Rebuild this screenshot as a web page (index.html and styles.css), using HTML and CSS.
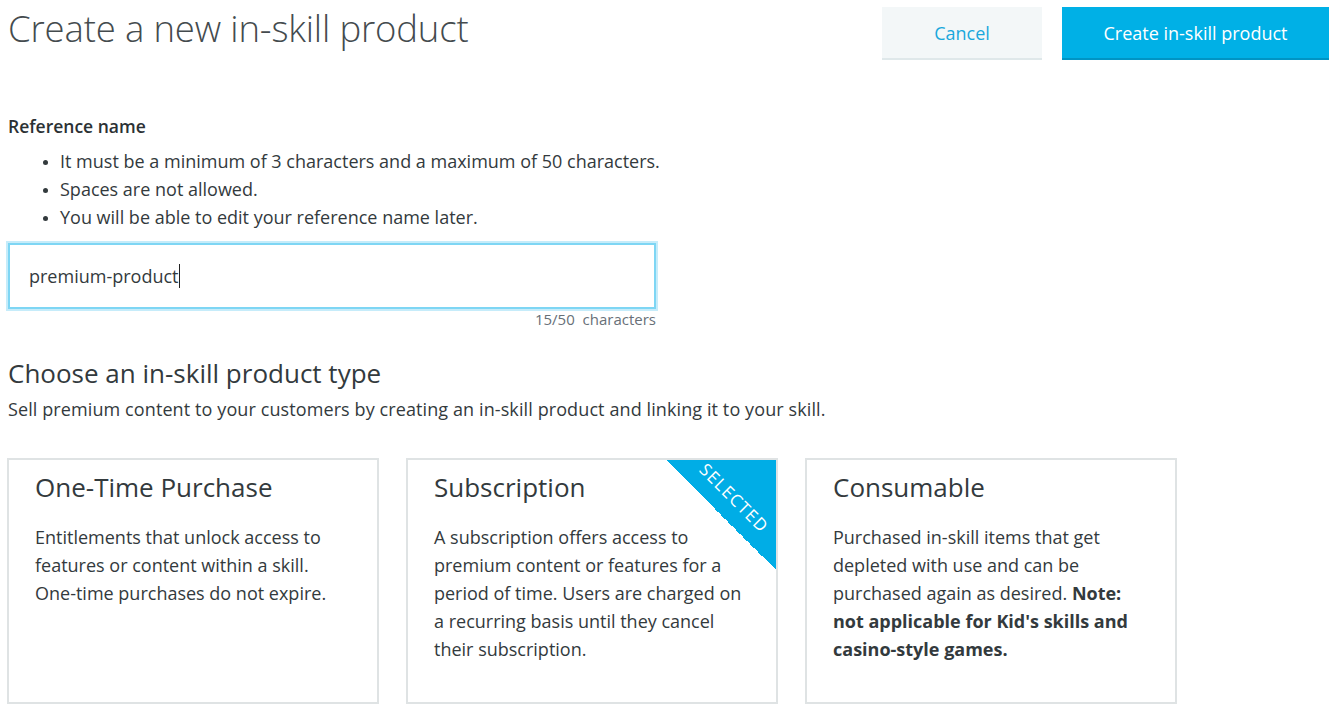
FILE: index.html
```html
<!DOCTYPE html>
<html lang="en">
<head>
<meta charset="utf-8">
<title>Create a new in-skill product</title>
<link rel="stylesheet" href="styles.css">
</head>
<body>
<div class="page">
  <header class="header">
    <h1 class="title">Create a new in-skill product</h1>
    <div class="actions">
      <button class="btn btn-secondary">Cancel</button>
      <button class="btn btn-primary">Create in-skill product</button>
    </div>
  </header>

  <section class="ref">
    <h2 class="label">Reference name</h2>
    <ul class="rules">
      <li>It must be a minimum of 3 characters and a maximum of 50 characters.</li>
      <li>Spaces are not allowed.</li>
      <li>You will be able to edit your reference name later.</li>
    </ul>
    <div class="field">
      <div class="input"><span class="value">premium-product</span><span class="caret"></span></div>
      <div class="counter">15/50&nbsp; characters</div>
    </div>
  </section>

  <section class="types">
    <h2 class="section-title">Choose an in-skill product type</h2>
    <p class="section-desc">Sell premium content to your customers by creating an in-skill product and linking it to your skill.</p>
    <div class="cards">
      <div class="card">
        <h3 class="card-title">One-Time Purchase</h3>
        <p class="card-body">Entitlements that unlock access to features or content within a skill. One-time purchases do not expire.</p>
      </div>
      <div class="card selected">
        <div class="ribbon"><span class="ribbon-text">SELECTED</span></div>
        <h3 class="card-title">Subscription</h3>
        <p class="card-body">A subscription offers access to premium content or features for a period of time. Users are charged on a recurring basis until they cancel their subscription.</p>
      </div>
      <div class="card">
        <h3 class="card-title">Consumable</h3>
        <p class="card-body">Purchased in-skill items that get depleted with use and can be purchased again as desired. <b>Note:</b><br><b>not applicable for Kid's skills and casino-style games.</b></p>
      </div>
    </div>
  </section>
</div>
</body>
</html>
```

FILE: styles.css
```css
* { box-sizing: border-box; }
html, body { margin: 0; padding: 0; background: #fff; }
body {
  font-family: "Open Sans", "Noto Sans", sans-serif;
  color: #333a3d;
  width: 1333px;
  overflow: hidden;
}
.page { padding: 0 4px 0 8px; }

.header {
  display: flex;
  justify-content: space-between;
  align-items: flex-start;
  height: 108px;
}
.title {
  margin: 6px 0 0 0;
  font-size: 36.5px;
  font-weight: 300;
  line-height: 44px;
  color: #444b4e;
  letter-spacing: -0.15px;
}
.actions {
  display: flex;
  gap: 20px;
  margin-top: 7px;
}
.btn {
  height: 53px;
  border: none;
  font-family: inherit;
  font-size: 18px;
  padding: 0;
  cursor: pointer;
}
.btn-secondary {
  width: 160px;
  background: #f3f7f8;
  color: #1aa7dc;
  border-bottom: 2px solid #dfe8ea;
}
.btn-primary {
  width: 267px;
  background: #00b0e6;
  color: #fff;
  border-bottom: 2px solid #0094c4;
}

.label {
  margin: 6px 0 0 0;
  font-size: 17.5px;
  font-weight: 600;
  line-height: 24px;
  color: #2b3134;
}
.rules {
  margin: 9px 0 0 0;
  padding-left: 52px;
  font-size: 18px;
  line-height: 28px;
  color: #333a3d;
}
.rules li::marker { font-size: 14px; }

.field { width: 648px; margin-top: 12px; }
.input {
  height: 66px;
  border: 2px solid #7ed6f4;
  box-shadow: 0 0 0 2px #c6ecfa;
  display: flex;
  align-items: center;
  padding-left: 19px;
  font-size: 18px;
  color: #333a3d;
}
.caret {
  display: inline-block;
  width: 1px;
  height: 24px;
  background: #222;
  margin-left: 1px;
}
.counter {
  text-align: right;
  font-size: 15px;
  line-height: 20px;
  margin-top: 0;
  color: #687078;
}

.section-title {
  margin: 27px 0 0 0;
  font-size: 26px;
  font-weight: 400;
  line-height: 34px;
  color: #333a3d;
}
.section-desc {
  margin: 6px 0 0 0;
  font-size: 18px;
  line-height: 26px;
  letter-spacing: 0.1px;
  color: #333a3d;
}

.cards {
  display: flex;
  gap: 28px;
  margin-top: 36px;
}
.card {
  position: relative;
  overflow: hidden;
  width: 372px;
  height: 246px;
  border: 2px solid #dfe3e4;
  padding: 9px 30px 0 26px;
  margin-left: -1px;
}
.card-title {
  margin: 0;
  font-size: 26px;
  font-weight: 400;
  line-height: 36px;
  color: #333a3d;
}
.card-body {
  margin: 18px 0 0 0;
  font-size: 18px;
  line-height: 28px;
  color: #333a3d;
}
.card-body b { font-weight: 700; }

.ribbon {
  position: absolute;
  top: -2px;
  right: -2px;
  width: 114px;
  height: 114px;
  background: linear-gradient(to bottom left, #00ade6 50%, transparent 50%);
}
.ribbon-text {
  position: absolute;
  top: 31px;
  right: -18px;
  width: 124px;
  text-align: center;
  transform: rotate(45deg);
  color: #fff;
  font-size: 17px;
  letter-spacing: 1.3px;
  line-height: 18px;
}
```
